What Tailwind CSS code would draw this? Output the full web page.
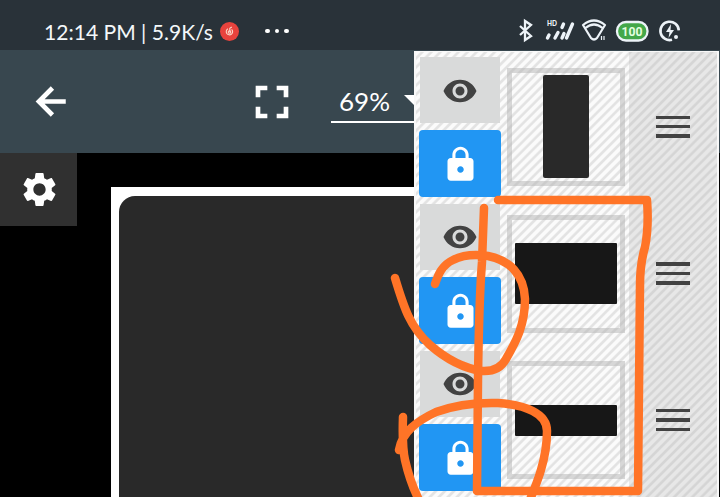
<!DOCTYPE html>
<html lang="en">
<head>
<meta charset="utf-8">
<title>Layers</title>
<script src="https://cdn.jsdelivr.net/npm/@tailwindcss/browser@4"></script>
</head>
<body class="bg-black font-['Lato','Open_Sans',sans-serif]">
<div class="relative h-[497px] w-[720px] overflow-hidden bg-black">
  <!-- Status bar -->
  <header class="flex h-[50px] items-center bg-[#293239] pt-3 pl-[44px] text-[#f4f8fa]">
    <svg class="h-[30px] w-[172px] shrink-0 overflow-visible" viewBox="0 0 172 30"><text x="0" y="23.500" font-size="22" textLength="169" lengthAdjust="spacingAndGlyphs" fill="currentColor">12:14 PM | 5.9K/s</text></svg>
    <svg class="ml-[4px] size-[19px] shrink-0" viewBox="0 0 19 19"><circle cx="9.500" cy="9.500" r="9.500" fill="#e8433d"/><g fill="none" stroke="#fbd9c9" stroke-width="1.100"><path d="M8 6.800a3.200 3.200 0 1 0 3.600.5M11.800 5L9.800 6.200v4"/><circle cx="9.500" cy="10" r="1.300"/></g></svg>
    <div class="ml-[26px] flex gap-[5px]"><i class="size-[4.5px] rounded-full bg-white"></i><i class="size-[4.5px] rounded-full bg-white"></i><i class="size-[4.5px] rounded-full bg-white"></i></div>
    <svg class="ml-[228px] h-[26px] w-[164px] shrink-0" viewBox="517 18 164 26" fill="none" stroke="#edf3f8" stroke-width="2">
      <path d="M520 26l11 10-6 4V21l6 4-11 10" stroke-width="2.300"/>
      <text x="547" y="26" font-size="6.500" font-weight="900" textLength="10" fill="#edf3f8" stroke="none">HD</text>
      <path d="M547.500 38l1.500-3M555 38l3-5.500M562 27.500l1.500-3.500M562 38l2-4.500M566.500 38l6-14" stroke-width="3.400" stroke-linecap="round"/>
      <path d="M583 25Q594 16 605 25L597 38Q594 41 591 38ZM585.500 28Q594 21 602.500 28" stroke-width="2.200" stroke-linejoin="round"/>
      <path d="M601.500 36v4M604 36v4" stroke-width="1.200"/>
      <rect x="617" y="22" width="30.500" height="18.500" rx="9" stroke-width="2.300" fill="#44a84a"/>
      <text x="621.500" y="36" font-family="Roboto" font-size="13.500" font-weight="700" textLength="21" lengthAdjust="spacingAndGlyphs" fill="#e4ffe0" stroke="none">100</text>
      <path d="M672 39.800a9.200 9.200 0 1 1 6.800-9.400" stroke-width="2.600"/>
      <path d="M671 24l-5 8h3.500l-1 6 5.500-8h-3.500z" fill="#edf3f8" stroke="none"/><circle cx="676" cy="37" r="2" fill="#edf3f8" stroke="none"/>
    </svg>
  </header>
  <!-- Toolbar -->
  <div class="flex h-[103px] items-center bg-[#38474f] text-white">
    <svg class="ml-[29px] size-[45px]" viewBox="0 0 24 24" fill="none" stroke="currentColor" stroke-width="2.500"><path d="M19.600 12H5.500M12.500 4.800L5.300 12l7.200 7.200"/></svg>
    <svg class="ml-[170px] size-[56px]" viewBox="0 0 24 24" fill="currentColor"><path d="M7 14H5v5h5v-2H7v-3zm-2-4h2V7h3V5H5v5zm12 7h-3v2h5v-5h-2v3zM14 5v2h3v3h2V5h-5z"/></svg>
    <div class="ml-[31px] flex h-[43px] w-[100px] items-center border-b-2 border-white pl-2">
      <svg class="h-[34px] w-[55px] overflow-visible" viewBox="0 0 55 34"><text x="0" y="27" font-size="25.500" textLength="51" lengthAdjust="spacingAndGlyphs" fill="currentColor">69%</text></svg>
      <svg class="ml-[10px] h-[11px] w-[22px]" viewBox="0 0 22 11"><path d="M0 0h22L11 11z" fill="currentColor"/></svg>
    </div>
  </div>
  <!-- Workspace -->
  <main class="flex h-[344px] items-start">
    <div class="flex h-[73px] w-[77px] items-center justify-center bg-[#303030] pl-px text-white">
      <svg class="size-[41px]" viewBox="0 0 24 24" fill="currentColor"><path d="M19.140 12.940c.040-.300.060-.610.060-.940 0-.320-.020-.640-.070-.940l2.030-1.580c.180-.140.230-.410.120-.610l-1.920-3.320c-.120-.220-.370-.290-.590-.220l-2.390.960c-.500-.380-1.030-.700-1.620-.940l-.360-2.540c-.040-.240-.240-.410-.480-.410h-3.840c-.240 0-.430.170-.470.410l-.360 2.540c-.590.240-1.130.570-1.620.940l-2.390-.960c-.220-.080-.470 0-.590.220L2.740 8.870c-.120.210-.080.470.120.610l2.030 1.580c-.050.300-.090.630-.090.940s.020.640.070.940l-2.030 1.580c-.180.140-.230.410-.120.610l1.920 3.320c.120.220.370.290.590.220l2.390-.960c.500.380 1.030.700 1.620.940l.360 2.540c.050.240.240.410.480.410h3.840c.240 0 .440-.170.470-.410l.360-2.540c.590-.240 1.130-.560 1.620-.940l2.390.960c.220.080.470 0 .590-.220l1.920-3.320c.120-.220.070-.470-.120-.610l-2.010-1.580zM12 15.600c-1.980 0-3.600-1.620-3.600-3.600s1.620-3.600 3.600-3.600 3.600 1.620 3.600 3.600-1.620 3.600-3.600 3.600z"/></svg>
    </div>
    <div class="mt-[34px] ml-[34px] h-[310px] w-[400px] bg-white pt-[9px] pl-[8px]"><div class="h-full rounded-tl-[16px] bg-[#292929]"></div></div>
  </main>

  <!-- Layer panel -->
  <aside class="absolute top-[51px] left-[414px] h-[446px] w-[305px] border-x-2 border-t border-[#f8f8f8] bg-[repeating-linear-gradient(135deg,#fbfbfb_0px,#fbfbfb_2.500px,#e3e3e3_3.800px,#e3e3e3_5.200px,#fbfbfb_6.400px)]">
    <div class="flex h-[146.700px]">
      <div class="flex w-[85px] flex-col pt-[5px] pl-[3px]">
        <div class="ml-px flex h-[66px] w-[80px] items-center justify-center bg-[#d9dada] pt-px"><svg class="size-[36px]" viewBox="0 0 24 24" fill="#424242"><path d="M12 4.500C7 4.500 2.730 7.610 1 12c1.730 4.390 6 7.500 11 7.500s9.270-3.110 11-7.500c-1.730-4.390-6-7.500-11-7.500zM12 17c-2.760 0-5-2.240-5-5s2.240-5 5-5 5 2.240 5 5-2.240 5-5 5zm0-8c-1.660 0-3 1.340-3 3s1.340 3 3 3 3-1.340 3-3-1.340-3-3-3z"/></svg></div>
        <div class="mt-[7px] flex h-[67px] w-[82px] items-center justify-center rounded bg-[#2196f3] pt-[2px]"><svg class="size-[39px]" viewBox="0 0 24 24" fill="white"><path d="M18 8h-1V6c0-2.760-2.240-5-5-5S7 3.240 7 6v2H6c-1.100 0-2 .900-2 2v10c0 1.100.900 2 2 2h12c1.100 0 2-.900 2-2V10c0-1.100-.900-2-2-2zm-6 9c-1.100 0-2-.900-2-2s.900-2 2-2 2 .900 2 2-.900 2-2 2zm3.100-9H8.900V6c0-1.710 1.390-3.100 3.100-3.100s3.100 1.390 3.100 3.100v2z"/></svg></div>
      </div>
      <div class="mt-[16px] ml-[6px] flex h-[118px] w-[118px] items-center justify-center border-[5px] border-[#b4b4b4]/50"><div class="mb-px h-[103px] w-[46px] rounded-[2px] bg-[#292929]"></div></div>
      <div class="ml-[4px] flex flex-1 flex-col gap-[5.800px] bg-[#b0b0b0]/27 pt-[63.500px] pl-[27px]"><i class="h-[3.600px] w-[34px] bg-[#424242]"></i><i class="h-[3.600px] w-[34px] bg-[#424242]"></i><i class="h-[3.600px] w-[34px] bg-[#424242]"></i></div>
    </div>
    <div class="flex h-[146.700px]">
      <div class="flex w-[85px] flex-col pt-[5px] pl-[3px]">
        <div class="ml-px flex h-[66px] w-[80px] items-center justify-center bg-[#d9dada] pt-px"><svg class="size-[36px]" viewBox="0 0 24 24" fill="#424242"><path d="M12 4.500C7 4.500 2.730 7.610 1 12c1.730 4.390 6 7.500 11 7.500s9.270-3.110 11-7.500c-1.730-4.390-6-7.500-11-7.500zM12 17c-2.760 0-5-2.240-5-5s2.240-5 5-5 5 2.240 5 5-2.240 5-5 5zm0-8c-1.660 0-3 1.340-3 3s1.340 3 3 3 3-1.340 3-3-1.340-3-3-3z"/></svg></div>
        <div class="mt-[7px] flex h-[67px] w-[82px] items-center justify-center rounded bg-[#2196f3] pt-[2px]"><svg class="size-[39px]" viewBox="0 0 24 24" fill="white"><path d="M18 8h-1V6c0-2.760-2.240-5-5-5S7 3.240 7 6v2H6c-1.100 0-2 .900-2 2v10c0 1.100.900 2 2 2h12c1.100 0 2-.900 2-2V10c0-1.100-.900-2-2-2zm-6 9c-1.100 0-2-.900-2-2s.900-2 2-2 2 .900 2 2-.900 2-2 2zm3.100-9H8.900V6c0-1.710 1.390-3.100 3.100-3.100s3.100 1.390 3.100 3.100v2z"/></svg></div>
      </div>
      <div class="mt-[16px] ml-[6px] flex h-[118px] w-[118px] items-center justify-center border-[5px] border-[#b4b4b4]/50"><div class="h-[61px] w-[102px] shrink-0 rounded-[1px] bg-[#171717]"></div></div>
      <div class="ml-[4px] flex flex-1 flex-col gap-[5.800px] bg-[#b0b0b0]/27 pt-[63.500px] pl-[27px]"><i class="h-[3.600px] w-[34px] bg-[#424242]"></i><i class="h-[3.600px] w-[34px] bg-[#424242]"></i><i class="h-[3.600px] w-[34px] bg-[#424242]"></i></div>
    </div>
    <div class="flex h-[151.600px]">
      <div class="flex w-[85px] flex-col pt-[5.500px] pl-[3px]">
        <div class="ml-px flex h-[66px] w-[80px] items-center justify-center bg-[#d9dada] pt-px"><svg class="size-[36px]" viewBox="0 0 24 24" fill="#424242"><path d="M12 4.500C7 4.500 2.730 7.610 1 12c1.730 4.390 6 7.500 11 7.500s9.270-3.110 11-7.500c-1.730-4.390-6-7.500-11-7.500zM12 17c-2.760 0-5-2.240-5-5s2.240-5 5-5 5 2.240 5 5-2.240 5-5 5zm0-8c-1.660 0-3 1.340-3 3s1.340 3 3 3 3-1.340 3-3-1.340-3-3-3z"/></svg></div>
        <div class="mt-[7px] flex h-[67px] w-[82px] items-center justify-center rounded bg-[#2196f3] pt-[2px]"><svg class="size-[39px]" viewBox="0 0 24 24" fill="white"><path d="M18 8h-1V6c0-2.760-2.240-5-5-5S7 3.240 7 6v2H6c-1.100 0-2 .900-2 2v10c0 1.100.900 2 2 2h12c1.100 0 2-.900 2-2V10c0-1.100-.900-2-2-2zm-6 9c-1.100 0-2-.900-2-2s.900-2 2-2 2 .900 2 2-.900 2-2 2zm3.100-9H8.900V6c0-1.710 1.390-3.100 3.100-3.100s3.100 1.390 3.100 3.100v2z"/></svg></div>
      </div>
      <div class="mt-[16px] ml-[6px] flex h-[118px] w-[118px] items-center justify-center border-[5px] border-[#b4b4b4]/50"><div class="h-[31px] w-[102px] shrink-0 rounded-[1px] bg-[#171717]"></div></div>
      <div class="ml-[4px] flex flex-1 flex-col gap-[5.800px] bg-[#b0b0b0]/27 pt-[63.500px] pl-[27px]"><i class="h-[3.600px] w-[34px] bg-[#424242]"></i><i class="h-[3.600px] w-[34px] bg-[#424242]"></i><i class="h-[3.600px] w-[34px] bg-[#424242]"></i></div>
    </div>
  </aside>

  <!-- Freehand markup -->
  <svg class="absolute inset-0" width="720" height="497" viewBox="0 0 720 497" fill="none" stroke="#ff7427" stroke-width="8.500" stroke-linecap="round" stroke-linejoin="round">
    <path d="M498 200L647 200Q649 227 645 247Q640 264 640 285L638 491L477 491L478 380Q479 300 482 262L484 208"/>
    <path d="M395 278C404 308 410 327 430 345C446 359 462 368 482 371Q499 372 506 359C516 342 525 325 525 299C524 274 509 260 488 256Q467 253 453 260C442 265 438 275 435 284"/>
    <path d="M403 417Q402 446 405 460Q410 482 419 500M399 450C402 432 417 421 436 412Q463 402 498 403C525 405 547 413 547 431C547 459 537 483 529 502"/>
  </svg>
</div>
</body>
</html>
